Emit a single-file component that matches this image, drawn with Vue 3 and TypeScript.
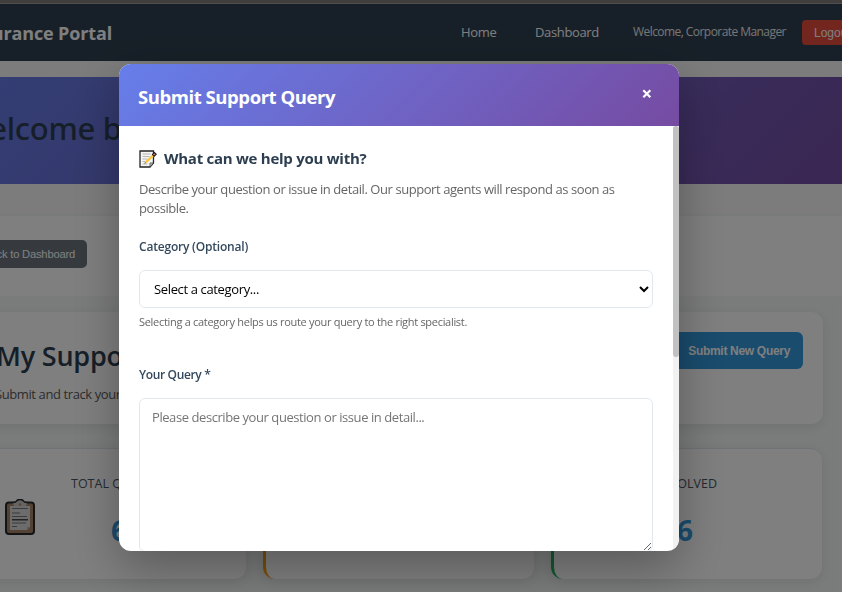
<script setup lang="ts">
import { ref } from 'vue'

interface Stat {
  label: string
  value: string
  tone: string
}

const stats: Stat[] = [
  { label: 'TOTAL QUERIES', value: '6', tone: 'total' },
  { label: 'PENDING', value: '0', tone: 'pending' },
  { label: 'RESOLVED', value: '6', tone: 'resolved' },
]
const category = ref('')
const query = ref('')
</script>

<template>
  <div class="screen">
    <div class="page">
      <div class="edge"></div>
      <nav class="nav">
        <span class="brand">Insurance Portal</span>
        <a class="link home">Home</a>
        <a class="link dash">Dashboard</a>
        <span class="who">Welcome, Corporate Manager</span>
        <button class="logout">Logout</button>
      </nav>
      <header class="banner"><h1>Welcome back</h1></header>
      <section class="toolbar">
        <button class="back">Back to Dashboard</button>
      </section>
      <main class="content">
        <section class="card intro">
          <div>
            <h2>My Support Queries</h2>
            <p>Submit and track your queries</p>
          </div>
          <button class="new">Submit New Query</button>
        </section>
        <section class="stats">
          <article v-for="s in stats" :key="s.tone" class="card stat" :class="s.tone">
            <svg v-if="s.tone === 'total'" class="clip" viewBox="0 0 30 36">
              <rect x="1" y="3.500" width="28" height="31.500" rx="3" fill="#a98468" stroke="#292929" stroke-width="2" />
              <path d="M5 7h20v21l-3 3H5z" fill="#d8d8d8" />
              <path d="M22 31v-3h3z" fill="#c8a898" />
              <path d="M8 4q3 0 4-2.500q3-2 6 0Q19 4 22 4l-1 3.500H9z" fill="#c9c9c9" />
              <path d="M8 3.500q3 0 4-2q3-2 6 0q1 2 4 2" fill="none" stroke="#292929" stroke-width="1.600" />
              <circle cx="15" cy="5.500" r="1.200" fill="#b8876b" />
              <path d="M7 9.500h16M7 14h8M7 17.500h15M7 24h14M7 27.500h5" stroke="#777" stroke-width="1.200" />
              <path d="M7 20.800h16" stroke="#222" stroke-width="1.200" />
            </svg>
            <div class="figures">
              <span class="label">{{ s.label }}</span>
              <strong>{{ s.value }}</strong>
            </div>
          </article>
        </section>
      </main>
    </div>

    <div class="overlay">
      <div class="modal">
        <div class="modal-head">
          <h3>Submit Support Query</h3>
          <button class="close" aria-label="Close">
            <svg viewBox="0 0 10 10"><path d="M1.300 1.300l7 7M8.300 1.300l-7 7" stroke="#fff" stroke-width="2.200" /></svg>
          </button>
        </div>
        <div class="modal-body">
          <div class="form">
            <h4>
              <svg class="memo" viewBox="0 0 18 18">
                <path d="M1 1h13.500v12l-3.500 4H1z" fill="#f5f5f5" stroke="#222" stroke-width="1.300" />
                <path d="M3.500 4h8M3.500 6.500h7M3.500 9h5M3.500 11.500h3M3.500 14h5" stroke="#b5b5b5" stroke-width="1" />
                <path d="M14.500 13H11v4z" fill="#ccc" stroke="#333" stroke-width=".7" />
                <path d="M5.300 13.800l1.200-2.800 8-7.500 1.700 1.700-8 7.400z" fill="#fbc740" />
                <path d="M13.500 4.500l2-2 1.700 1.700-2 2z" fill="#dc8f79" stroke="#222" stroke-width="1.100" />
                <path d="M5.300 13.800l.8-1.600.8.800z" fill="#333" />
              </svg>
              <span>What can we help you with?</span>
            </h4>
            <p class="lead">
              <span>Describe your question or issue in detail. Our support agents will respond as soon as</span><br />
              <span>possible.</span>
            </p>
            <label class="cat-label">Category (Optional)</label>
            <select v-model="category" class="field">
              <option value="">Select a category...</option>
            </select>
            <small>Selecting a category helps us route your query to the right specialist.</small>
            <label class="query-label">Your Query *</label>
            <textarea v-model="query" class="field area" placeholder="Please describe your question or issue in detail..."></textarea>
          </div>
          <div class="track"><div class="thumb"></div></div>
        </div>
      </div>
    </div>
  </div>
</template>

<style>
body {
  margin: 0;
  overflow: hidden;
}
</style>

<style scoped>
.screen {
  width: 842px;
  height: 592px;
  overflow: hidden;
  font-family: 'Open Sans', 'Noto Sans', sans-serif;
}
.screen * {
  box-sizing: border-box;
}
h1, h2, h3, h4, p {
  margin: 0;
}
button {
  border: 0;
  padding: 0;
  white-space: nowrap;
}
.page {
  height: 592px;
  overflow: hidden;
  background: #f8f9f9;
}
.edge {
  height: 4px;
  background: #807e7c;
  border-bottom: 1px solid #a09e9e;
}
.nav {
  height: 57px;
  display: flex;
  align-items: center;
  background: #2f3f50;
  color: #fff;
  white-space: nowrap;
  overflow: hidden;
}
.nav > * {
  flex: none;
}
.brand {
  width: 161px;
  margin-left: -49px;
  text-align: right;
  font-size: 18px;
  font-weight: 700;
  letter-spacing: -0.15px;
}
.link {
  margin-top: -2px;
  font-size: 13px;
  letter-spacing: -0.35px;
}
.home {
  width: 74px;
  margin-left: 349px;
}
.dash {
  width: 98px;
}
.who {
  width: 169px;
  margin-top: -2px;
  font-size: 12px;
  letter-spacing: -0.56px;
  opacity: .9;
}
.logout {
  width: 64px;
  height: 25px;
  border-radius: 4px;
  background: #e74c3c;
  color: #fff;
  font: 12px 'Liberation Sans', sans-serif;
  padding-left: 12px;
  text-align: left;
}
.banner {
  height: 107px;
  margin: 16px 0 0 -39px;
  padding-bottom: 5px;
  width: 920px;
  display: flex;
  align-items: center;
  background: linear-gradient(135deg, #667eea, #764ba2);
}
h1 {
  color: #2c3e50;
  font-family: 'Noto Sans', sans-serif;
  font-size: 31px;
  font-weight: 500;
  letter-spacing: -0.3px;
  white-space: nowrap;
}
.toolbar {
  height: 80px;
  margin-top: 32px;
  display: flex;
  align-items: flex-start;
  padding-top: 24px;
  background: #fff;
  box-shadow: 0 0 4px rgba(44, 62, 80, .08);
}
.back {
  width: 118px;
  height: 28px;
  margin-left: -31px;
  padding-right: 12px;
  text-align: right;
  border-radius: 5px;
  background: #6c757d;
  color: #fff;
  font: 11.200px 'Liberation Sans', sans-serif;
  letter-spacing: -0.2px;
}
.content {
  width: 839px;
  height: 296px;
  padding: 16px 16px 0 0;
  background: #f5f8f7;
}
.card {
  background: #fff;
  border-radius: 12px;
  box-shadow: 0 3px 12px rgba(44, 62, 80, .1);
}
.intro {
  height: 112px;
  margin-left: -40px;
  padding: 20px 20px 0 40px;
  display: flex;
  justify-content: space-between;
  white-space: nowrap;
}
h2 {
  margin: 4px 0 0 -4px;
  color: #2c3e50;
  font-size: 27px;
  line-height: 40px;
  font-weight: 600;
  letter-spacing: -0.2px;
}
.intro p {
  margin: 9px 0 0 -5px;
  color: #5a5a5a;
  font-size: 13px;
  line-height: 18px;
  letter-spacing: -0.4px;
}
.new {
  width: 150px;
  height: 37px;
  padding-right: 13px;
  text-align: right;
  border-radius: 6px;
  background: #3498db;
  color: #fff;
  font: 700 12px 'Liberation Sans', sans-serif;
  letter-spacing: -0.31px;
}
.stats {
  display: grid;
  grid-template-columns: repeat(3, 271px);
  column-gap: 17px;
  margin: 24px 0 0 -25px;
}
.stat {
  height: 131px;
  display: flex;
  border-top: 1px solid #dfe6ec;
}
.pending {
  border-left: 3px solid #f39c12;
}
.resolved {
  border-left: 3px solid #27ae60;
}
.clip {
  width: 30px;
  height: 36px;
  margin: 50px 0 0 30px;
}
.figures {
  width: 120px;
  margin-left: 32px;
  display: flex;
  flex-direction: column;
  align-items: center;
}
.total .figures {
  width: 95px;
  margin-left: 36px;
  align-items: flex-start;
}
.total strong {
  margin-left: 40px;
}
.resolved .figures {
  width: 74px;
  margin-left: 89px;
  align-items: flex-end;
}
.resolved strong {
  margin-right: 24px;
}
.label {
  margin-top: 26px;
  color: #495665;
  font-size: 12.500px;
  line-height: 18px;
  font-weight: 500;
  white-space: nowrap;
}
.figures strong {
  margin-top: 17px;
  color: #3498db;
  font-size: 28px;
  line-height: 40px;
}
.overlay {
  position: fixed;
  inset: 0;
  display: flex;
  justify-content: center;
  align-items: flex-start;
  padding: 64px 44px 0 0;
  background: rgba(0, 0, 0, .5);
}
.modal {
  width: 560px;
  height: 487px;
  border-radius: 12px;
  overflow: hidden;
  background: #fff;
  box-shadow: 0 16px 48px rgba(0, 0, 0, .3);
}
.modal-head {
  height: 62px;
  display: flex;
  justify-content: space-between;
  align-items: center;
  padding: 3px 27px 0 19px;
  background: linear-gradient(135deg, #667eea, #764ba2);
}
h3 {
  color: #fff;
  font-size: 18.500px;
  font-weight: 700;
  letter-spacing: -0.44px;
}
.close {
  display: flex;
  margin-top: -5px;
  background: none;
}
.close svg {
  width: 10px;
  height: 10px;
}
.modal-body {
  height: 425px;
  display: flex;
}
.form {
  width: 554px;
  padding: 21px 20px 0 20px;
  display: flex;
  flex-direction: column;
  flex: none;
  overflow: hidden;
}
h4 {
  display: flex;
  gap: 7px;
  color: #2c3e50;
  font-size: 15px;
  line-height: 22px;
  font-weight: 700;
  letter-spacing: -0.26px;
}
.memo {
  width: 18px;
  height: 18px;
  margin-top: 3px;
}
.lead {
  margin-top: 11px;
  color: #666;
  font-size: 13px;
  line-height: 19px;
  letter-spacing: -0.43px;
  white-space: nowrap;
}
label {
  color: #34495e;
  font-size: 12px;
  line-height: 18px;
  font-weight: 600;
}
.cat-label {
  margin-top: 20px;
  letter-spacing: -0.2px;
}
.field {
  width: 514px;
  border: 1px solid #e1e8ed;
  border-radius: 6px;
  background: #fff;
  font-family: inherit;
  font-size: 13px;
  letter-spacing: -0.36px;
  outline: none;
  flex: none;
}
select.field {
  height: 38px;
  margin-top: 14px;
  padding: 0 0 0 10px;
  color: #000;
}
small {
  margin-top: 6px;
  color: #666;
  font-size: 11px;
  line-height: 16px;
  letter-spacing: -0.3px;
}
.query-label {
  margin-top: 36px;
  letter-spacing: -0.35px;
}
.area {
  height: 154px;
  margin-top: 14px;
  padding: 9px 12px;
  line-height: 18px;
  letter-spacing: -0.43px;
  resize: vertical;
}
.area::placeholder {
  color: #757575;
}
.track {
  width: 6px;
  height: 425px;
  background: #f1f1f1;
}
.thumb {
  height: 231px;
  border-radius: 3px;
  background: #c1c1c1;
}
</style>
